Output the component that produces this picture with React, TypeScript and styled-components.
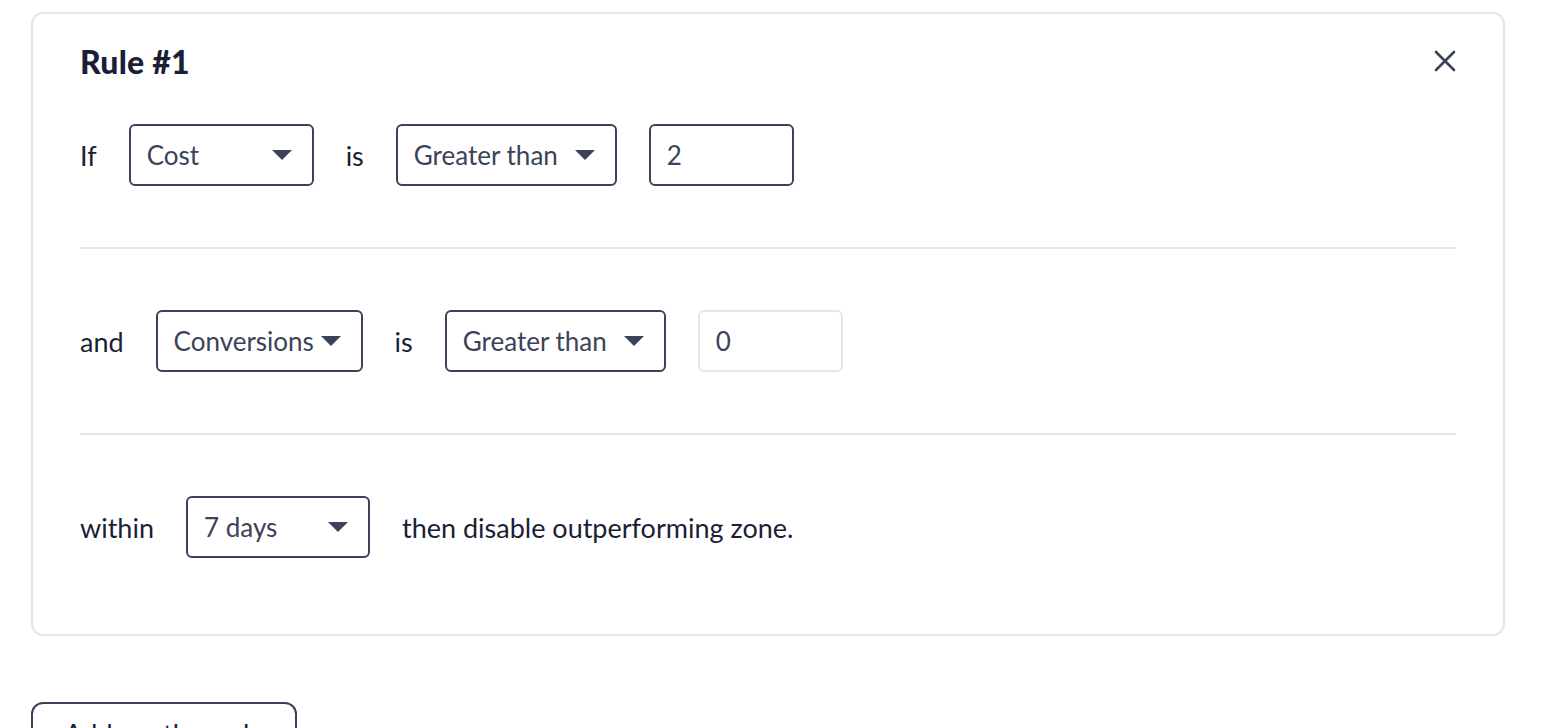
import React from 'react'
import styled, { createGlobalStyle } from 'styled-components'

type Condition = {
    joiner: string
    field: string
    fieldWidth: number
    operator: string
    value: string
    valueMuted?: boolean
}

const conditions: Condition[] = [
    { joiner: 'If', field: 'Cost', fieldWidth: 185, operator: 'Greater than', value: '2' },
    { joiner: 'and', field: 'Conversions', fieldWidth: 207, operator: 'Greater than', value: '0', valueMuted: true },
]

export default function App() {
    return (
        <>
            <GlobalStyle />
            <Page>
                <Card>
                    <CardHeader>
                        <Title>Rule #1</Title>
                        <CloseButton aria-label="Remove rule">
                            <svg width="26" height="26" viewBox="0 0 26 26">
                                <path d="M4 4 L22 22 M22 4 L4 22" stroke="#3c4257" strokeWidth="2.6" strokeLinecap="round" />
                            </svg>
                        </CloseButton>
                    </CardHeader>

                    {conditions.map((c, i) => (
                        <React.Fragment key={i}>
                            <Row>
                                <Label>{c.joiner}</Label>
                                <Select $width={c.fieldWidth}>
                                    <span>{c.field}</span>
                                    <Caret />
                                </Select>
                                <Label>is</Label>
                                <Select $width={221}>
                                    <span>{c.operator}</span>
                                    <Caret />
                                </Select>
                                <ValueInput $muted={c.valueMuted}>{c.value}</ValueInput>
                            </Row>
                            <Divider />
                        </React.Fragment>
                    ))}

                    <Row>
                        <Label>within</Label>
                        <Select $width={184}>
                            <span>7 days</span>
                            <Caret />
                        </Select>
                        <Label>then disable outperforming zone.</Label>
                    </Row>
                </Card>

                <AddButton>Add another rule</AddButton>
            </Page>
        </>
    )
}

const GlobalStyle = createGlobalStyle`
    body {
        margin: 0;
        background: #ffffff;
        font-family: 'Lato', 'Noto Sans', sans-serif;
    }
`

const Page = styled.div`
    padding: 12px 49px 0 31px;
`

const Card = styled.div`
    border: 2px solid #e6e6e6;
    border-radius: 12px;
    padding: 23px 47px 76px;
`

const CardHeader = styled.div`
    height: 48px;
    display: flex;
    align-items: center;
    justify-content: space-between;
    margin-bottom: 39px;
`

const Title = styled.h2`
    margin: 0;
    font-size: 32px;
    font-weight: 900;
    color: #1a1f36;
    letter-spacing: 0.2px;
`

const CloseButton = styled.button`
    border: none;
    background: transparent;
    padding: 0;
    margin-right: -2px;
    display: flex;
    cursor: pointer;
`

const Row = styled.div`
    display: flex;
    align-items: center;
    gap: 32px;
    height: 62px;
`

const Label = styled.span`
    font-size: 27px;
    color: #1a1f36;
`

const Select = styled.div<{ $width: number }>`
    box-sizing: border-box;
    width: ${(p) => p.$width}px;
    height: 62px;
    display: flex;
    align-items: center;
    justify-content: space-between;
    gap: 4px;
    padding: 0 20px 0 16px;
    border: 2px solid #3c4257;
    border-radius: 6px;
    font-size: 26px;
    color: #3c4257;
    white-space: nowrap;
`

const Caret = styled.span`
    flex-shrink: 0;
    width: 0;
    height: 0;
    border-left: 10px solid transparent;
    border-right: 10px solid transparent;
    border-top: 10px solid #3c4257;
`

const ValueInput = styled.div<{ $muted?: boolean }>`
    box-sizing: border-box;
    width: 145px;
    height: 62px;
    display: flex;
    align-items: center;
    padding: 0 16px;
    border: 2px solid ${(p) => (p.$muted ? '#e6e6e6' : '#3c4257')};
    border-radius: 6px;
    font-size: 26px;
    color: #3c4257;
`

const Divider = styled.hr`
    margin: 61px 0;
    border: none;
    height: 2px;
    background: #e6e6e6;
`

const AddButton = styled.button`
    margin-top: 66px;
    width: 266px;
    height: 62px;
    border: 2px solid #3c4257;
    border-radius: 12px;
    background: #ffffff;
    font-family: 'Lato', 'Noto Sans', sans-serif;
    font-size: 27px;
    color: #1a1f36;
`
